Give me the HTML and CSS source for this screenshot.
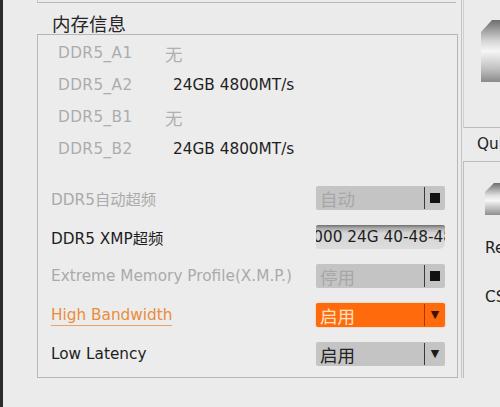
FILE: index.html
```html
<!DOCTYPE html>
<html lang="zh-CN">
<head>
    <meta charset="UTF-8">
    <title>内存信息</title>
    <link rel="stylesheet" href="styles.css">
</head>
<body>
    <div class="screen">
        <div class="main">
            <div class="top-edge"></div>
            <h3 class="title">内存信息</h3>
            <div class="box">
                <div class="slots">
                    <div class="slot"><span class="slot-name">DDR5_A1</span><span class="slot-empty">无</span></div>
                    <div class="slot"><span class="slot-name">DDR5_A2</span><span class="slot-val">24GB 4800MT/s</span></div>
                    <div class="slot"><span class="slot-name">DDR5_B1</span><span class="slot-empty">无</span></div>
                    <div class="slot"><span class="slot-name">DDR5_B2</span><span class="slot-val">24GB 4800MT/s</span></div>
                </div>

                <div class="settings">
                    <div class="setting">
                        <span class="label dim">DDR5自动超频</span>
                        <div class="select disabled"><span class="sel-text">自动</span><span class="sel-btn"><span class="square"></span></span></div>
                    </div>
                    <div class="setting">
                        <span class="label">DDR5 XMP超频</span>
                        <div class="field"><span class="field-text">DDR5-8000 24G 40-48-48</span></div>
                    </div>
                    <div class="setting">
                        <span class="label dim">Extreme Memory Profile(X.M.P.)</span>
                        <div class="select disabled"><span class="sel-text">停用</span><span class="sel-btn"><span class="square"></span></span></div>
                    </div>
                    <div class="setting">
                        <span class="label active">High Bandwidth</span>
                        <div class="select hot"><span class="sel-text">启用</span><span class="sel-btn"><span class="arrow">▼</span></span></div>
                    </div>
                    <div class="setting">
                        <span class="label">Low Latency</span>
                        <div class="select"><span class="sel-text">启用</span><span class="sel-btn"><span class="arrow">▼</span></span></div>
                    </div>
                </div>
            </div>
        </div>

        <div class="side">
            <div class="side-top">
                <svg class="metal big" width="21" height="64" viewBox="0 0 21 64">
                    <defs>
                        <linearGradient id="m1" x1="0" y1="0" x2="0" y2="1">
                            <stop offset="0" stop-color="#6e6e6e"/>
                            <stop offset="0.35" stop-color="#d8d8d8"/>
                            <stop offset="0.5" stop-color="#f6f6f6"/>
                            <stop offset="0.8" stop-color="#bdbdbd"/>
                            <stop offset="1" stop-color="#8a8a8a"/>
                        </linearGradient>
                    </defs>
                    <path d="M0 13 L11 1 L21 1 L21 63 L0 63 Z" fill="url(#m1)"/>
                </svg>
            </div>
            <div class="side-title">Quick</div>
            <div class="side-box">
                <svg class="metal small" width="17" height="34" viewBox="0 0 17 34">
                    <defs>
                        <linearGradient id="m2" x1="0" y1="0" x2="0" y2="1">
                            <stop offset="0" stop-color="#6e6e6e"/>
                            <stop offset="0.4" stop-color="#e2e2e2"/>
                            <stop offset="0.55" stop-color="#f6f6f6"/>
                            <stop offset="1" stop-color="#8e8e8e"/>
                        </linearGradient>
                    </defs>
                    <path d="M0 10 L9 1 L17 1 L17 33 L0 33 Z" fill="url(#m2)"/>
                </svg>
                <div class="side-text re">Reset</div>
                <div class="side-text cs">CSM</div>
            </div>
        </div>
    </div>
</body>
</html>
```

FILE: styles.css
```css
html, body { margin: 0; padding: 0; }
body { background: #ebebeb; font-family: "DejaVu Sans", "Noto Sans CJK SC", sans-serif; color: #222; width: 500px; height: 407px; overflow: hidden; }

.screen { display: flex; height: 407px; border-left: 3px solid #2c2c2c; box-sizing: border-box; }

.main { width: 457px; flex: none; }
.top-edge { margin-left: 34px; width: 418px; height: 2px; border-bottom: 1px solid #b9b9b9; border-left: 1px solid #c4c4c4; }
.title { margin: 9px 0 0 49px; height: 22px; font-size: 18.5px; font-weight: normal; line-height: 22px; color: #262626; font-family: "Noto Sans CJK SC", sans-serif; }

.box { margin-left: 34px; width: 419px; height: 342px; border: 1px solid #b6b6b6; background: #ececec; }

.slots { padding: 2px 0 0 20px; }
.slot { display: flex; align-items: center; height: 32px; font-size: 15.3px; }
.slot-name { width: 107px; color: #acacac; letter-spacing: 0.4px; }
.slot-empty { color: #b0b0b0; font-family: "Noto Sans CJK SC", sans-serif; font-size: 17.5px; }
.slot-val { margin-left: 8px; color: #1e1e1e; }

.settings { margin-top: 13px; padding: 0 12px 0 13px; }
.setting { display: flex; align-items: center; justify-content: space-between; height: 39px; }
.label { font-size: 15.3px; color: #1e1e1e; }
.label.dim { color: #aaaaaa; }
.label.active { color: #e98d3c; border-bottom: 1px solid #f0a060; padding-bottom: 1px; margin-top: 2px; }

.select { display: flex; width: 129px; height: 24px; background: #c4c4c4; border-radius: 2px; }
.sel-text { flex: 1; padding-left: 4px; line-height: 25px; font-size: 17.5px; font-family: "Noto Sans CJK SC", sans-serif; color: #222; }
.sel-btn { width: 20px; border-left: 1px solid #3a3a3a; margin: 1px 0; display: flex; align-items: center; justify-content: center; }
.square { width: 10px; height: 10px; background: #111; }
.arrow { font-size: 11px; color: #1a1a1a; }
.select.disabled .sel-text { color: #a7a7a7; }
.select.hot { background: #ff6b0c; box-shadow: 0 0 2px #ffb070; }
.select.hot .sel-text { color: #ffe2c4; }
.select.hot .sel-btn { border-left-color: #a83800; }
.select.hot .arrow { color: #3a1400; }

.field { width: 129px; height: 24px; overflow: hidden; white-space: nowrap; background: linear-gradient(#6f6f6f 0, #a8a8a8 3px, #d6d6d6 8px, #dcdcdc 100%); border-radius: 2px 2px 6px 2px; direction: rtl; }
.field-text { direction: ltr; unicode-bidi: bidi-override; display: inline-block; font-size: 15.3px; line-height: 25px; color: #1e1e1e; margin-right: -8px; }

.side { flex: 1; display: flex; flex-direction: column; margin-left: 1px; border-left: 1px solid #c4c4c4; height: 378px; overflow: hidden; }
.side-top { height: 128px; border-bottom: 1px solid #bdbdbd; box-sizing: border-box; padding: 19px 0 0 17px; margin-left: 1px; border-left: 1px solid #d0d0d0; }
.metal { display: block; }
.side-title { height: 33px; line-height: 32px; padding-left: 15px; font-size: 15.3px; color: #222; white-space: nowrap; }
.side-box { flex: 1; border-top: 1px solid #bdbdbd; border-left: 1px solid #bdbdbd; margin-left: 1px; padding: 20px 0 0 21px; white-space: nowrap; }
.side-text { font-size: 15.3px; color: #222; }
.side-text.re { margin-top: 23px; }
.side-text.cs { margin-top: 31px; }
```
